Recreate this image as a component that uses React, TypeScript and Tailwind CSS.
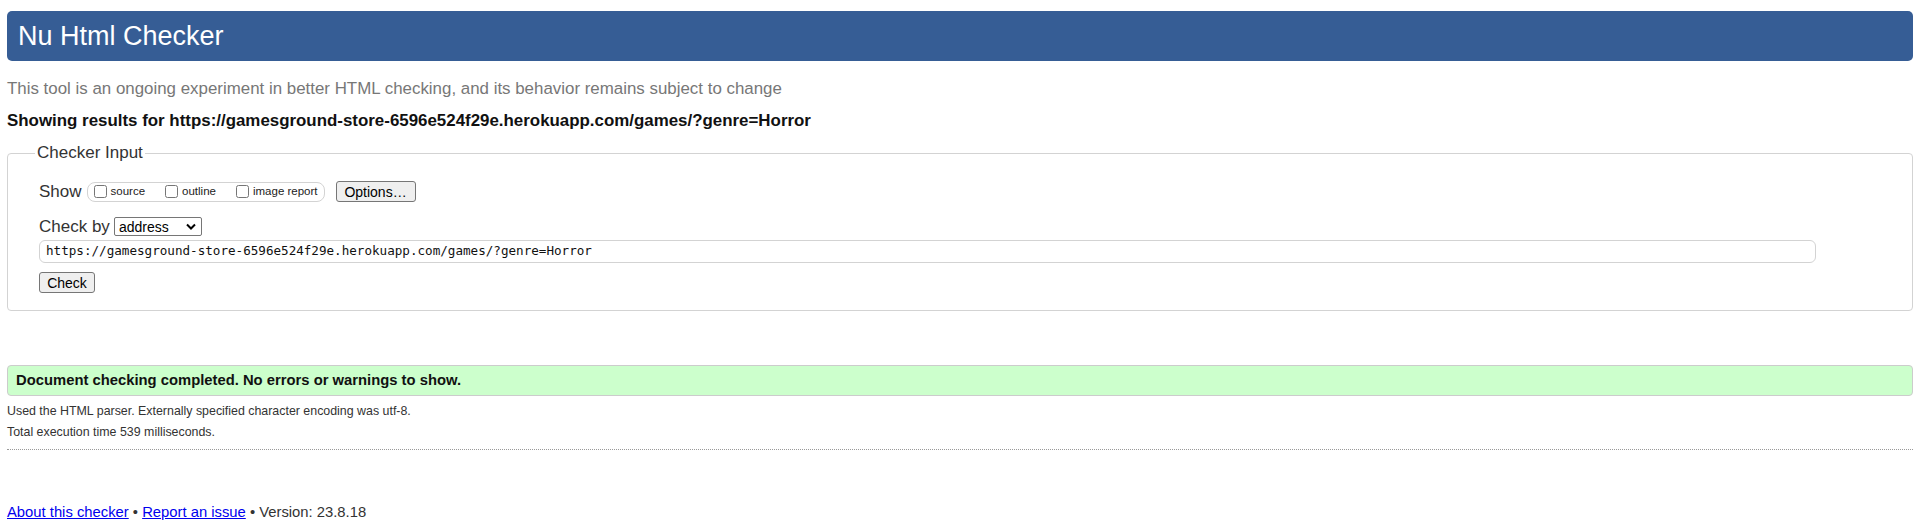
import { useState } from 'react'

const sans = "font-['Liberation_Sans',Arial,sans-serif]"

function Box({ label }: { label: string }) {
  return (
    <label className="flex items-center gap-[4px]">
      <input type="checkbox" className="m-0 h-[13px] w-[13px]" />
      <span className="text-[11.5px] leading-none text-[#222]">{label}</span>
    </label>
  )
}

export default function App() {
  const [url] = useState('https://gamesground-store-6596e524f29e.herokuapp.com/games/?genre=Horror')

  return (
    <div className={`${sans} min-h-[524px] bg-white px-[7px] pt-[11px] text-[#222]`}>
      <h1 className="flex h-[50px] items-center rounded-[5px] bg-[#365d95] pl-[11px] text-[27px] leading-none text-white">
        Nu Html Checker
      </h1>

      <p className="mt-[18px] text-[16.9px] leading-[20px] text-[#777]">
        This tool is an ongoing experiment in better HTML checking, and its behavior remains subject to change
      </p>
      <p className="mt-[12px] text-[16.9px] font-bold leading-[20px] text-[#111]">
        Showing results for {url}
      </p>

      <fieldset className="mt-[12px] rounded-[4px] border border-[#d3d3d3] pb-[15px] pl-[31px]">
        <legend className="-ml-[4px] px-[2px] text-[17px] leading-[20px] text-[#333]">Checker Input</legend>

        <div className="mt-[18px] flex h-[21px] items-center">
          <span className="text-[17px] leading-none text-[#333]">Show</span>
          <div className="ml-[5px] flex h-[20px] items-center gap-[20px] rounded-[8px] border border-[#d3d3d3] pl-[6px] pr-[6px]">
            <Box label="source" />
            <Box label="outline" />
            <Box label="image report" />
          </div>
          <button className="ml-[11px] h-[21px] w-[80px] rounded-[3px] border border-[#767676] bg-[#efefef] text-[14px] leading-none text-black">
            Options…
          </button>
        </div>

        <div className="mt-[14px] flex h-[21px] items-center">
          <span className="text-[17px] leading-none text-[#333]">Check by</span>
          <div className="ml-[4px] flex h-[19px] w-[88px] items-center justify-between rounded-[2px] border border-[#767676] bg-white pl-[4px] pr-[5px]">
            <span className="text-[14px] leading-none text-black">address</span>
            <svg width="10" height="7" viewBox="0 0 10 7">
              <path d="M1 1.5 L5 5.5 L9 1.5" fill="none" stroke="#000" strokeWidth="2" />
            </svg>
          </div>
        </div>

        <div className="mt-[3px] flex h-[23px] w-[1777px] items-center rounded-[6px] border border-[#d3d3d3] pl-[6px]">
          <span className="font-['DejaVu_Sans_Mono',monospace] text-[12.6px] leading-none text-[#111]">{url}</span>
        </div>

        <button className="mt-[9px] h-[21px] w-[56px] rounded-[3px] border border-[#767676] bg-[#efefef] text-[14px] leading-none text-black">
          Check
        </button>
      </fieldset>

      <div className="mt-[54px] flex h-[31px] items-center rounded-[4px] border border-[#cccccc] bg-[#ccffcc] pl-[8px]">
        <span className="text-[14.8px] font-bold leading-none text-[#111]">
          Document checking completed. No errors or warnings to show.
        </span>
      </div>

      <p className="mt-[5px] text-[12.4px] leading-[21px] text-[#333]">
        Used the HTML parser. Externally specified character encoding was utf-8.
      </p>
      <p className="text-[12.4px] leading-[21px] text-[#333]">Total execution time 539 milliseconds.</p>

      <hr className="mt-[6px] border-0 border-t border-dotted border-[#999]" />

      <p className="mt-[53px] text-[14.8px] leading-[18px] text-[#333]">
        <a href="#" className="text-[#0000ee] underline">About this checker</a>
        {' • '}
        <a href="#" className="text-[#0000ee] underline">Report an issue</a>
        {' • Version: 23.8.18'}
      </p>
    </div>
  )
}
